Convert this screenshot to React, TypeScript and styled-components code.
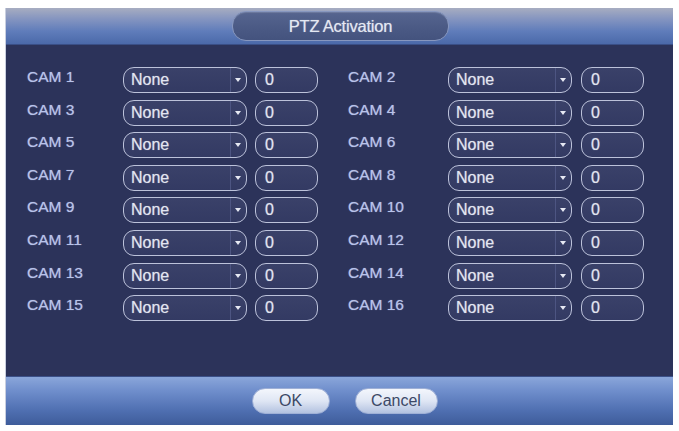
import React from "react";
import styled, { createGlobalStyle } from "styled-components";

const GlobalStyle = createGlobalStyle`
  html, body {
    margin: 0;
    padding: 0;
    background: #ffffff;
  }
  body {
    font-family: "Liberation Sans", Arial, sans-serif;
  }
`;

const Page = styled.div`
  width: 679px;
  height: 431px;
  padding: 8px 6px 6px 5px;
  box-sizing: border-box;
`;

const Window = styled.div`
  height: 100%;
  display: flex;
  flex-direction: column;
  background: #2c335a;
  border-left: 1px solid #c9cfdf;
`;

const TitleBar = styled.div`
  height: 36px;
  display: flex;
  align-items: center;
  justify-content: center;
  background: linear-gradient(
    to bottom,
    #a7adc1 0%,
    #8595c0 30%,
    #5f7cba 65%,
    #4b69a9 100%
  );
  border-bottom: 1px solid #3a4f86;
`;

const TitlePill = styled.div`
  width: 215px;
  height: 28px;
  margin-left: 2px;
  border-radius: 14px;
  display: flex;
  align-items: center;
  justify-content: center;
  background: linear-gradient(to bottom, #56658f 0%, #4a5984 60%, #44537e 100%);
  border: 1px solid #8797bf;
  box-shadow: inset 0 1px 1px rgba(255, 255, 255, 0.15);
  color: #e4e8f2;
  font-size: 16.5px;
  letter-spacing: -0.2px;
  text-shadow: 0 0 1px rgba(228, 232, 242, 0.6);
`;

const Body = styled.div`
  flex: 1;
  padding: 22px 0 0 21px;
  display: grid;
  grid-template-columns: 321px 1fr;
  grid-auto-rows: 32.6px;
  align-content: start;
`;

const Row = styled.div`
  display: flex;
  align-items: flex-start;
`;

const Label = styled.div<{ $width: number }>`
  width: ${(p) => p.$width}px;
  height: 26px;
  line-height: 20px;
  color: #b9c3ea;
  font-size: 15.5px;
  text-shadow: 0 0 1px rgba(185, 195, 234, 0.7);
`;

const Field = styled.div`
  height: 26px;
  box-sizing: border-box;
  border: 1.5px solid #bcc2da;
  border-radius: 11px;
  background: linear-gradient(to bottom, #3a4169 0%, #333a63 100%);
  color: #e2e5f0;
  font-size: 16px;
  display: flex;
  align-items: center;
  text-shadow: 0 0 1px rgba(226, 229, 240, 0.6);
`;

const Select = styled(Field)`
  width: 124px;
  padding-left: 7px;
`;

const SelectText = styled.span`
  flex: 1;
`;

const ArrowPart = styled.span`
  width: 14px;
  height: 100%;
  border-left: 1px solid #4d5582;
  display: flex;
  align-items: center;
  justify-content: center;
  margin-right: 1px;

  &::after {
    content: "";
    width: 0;
    height: 0;
    border-left: 3px solid transparent;
    border-right: 3px solid transparent;
    border-top: 4px solid #e6e9f3;
  }
`;

const NumberBox = styled(Field)<{ $gap: number }>`
  width: 63px;
  margin-left: ${(p) => p.$gap}px;
  padding-left: 9px;
`;

const Footer = styled.div`
  height: 48px;
  display: flex;
  align-items: center;
  justify-content: center;
  gap: 25px;
  padding-left: 10px;
  background: linear-gradient(
    to bottom,
    #8aa6da 0%,
    #6e8dcb 30%,
    #4f6fb1 70%,
    #3e5c9a 100%
  );
  border-top: 1px solid #3b5088;
`;

const Button = styled.button<{ $width: number }>`
  width: ${(p) => p.$width}px;
  height: 26px;
  border-radius: 13px;
  border: 1px solid #9fb0d6;
  background: linear-gradient(to bottom, #f3f6fc 0%, #dfe6f4 50%, #b3c2e0 100%);
  color: #3c4866;
  font-family: "Liberation Sans", Arial, sans-serif;
  font-size: 16px;
  padding: 0;
  cursor: pointer;
`;

const cams = Array.from({ length: 16 }, (_, i) => i + 1);

export default function App() {
  return (
    <>
      <GlobalStyle />
      <Page>
        <Window>
          <TitleBar>
            <TitlePill>PTZ Activation</TitlePill>
          </TitleBar>
          <Body>
            {cams.map((n) => {
              const right = n % 2 === 0;
              return (
                <Row key={n}>
                  <Label $width={right ? 100 : 96}>CAM {n}</Label>
                  <Select>
                    <SelectText>None</SelectText>
                    <ArrowPart />
                  </Select>
                  <NumberBox $gap={right ? 9 : 8}>0</NumberBox>
                </Row>
              );
            })}
          </Body>
          <Footer>
            <Button $width={78}>OK</Button>
            <Button $width={83}>Cancel</Button>
          </Footer>
        </Window>
      </Page>
    </>
  );
}
